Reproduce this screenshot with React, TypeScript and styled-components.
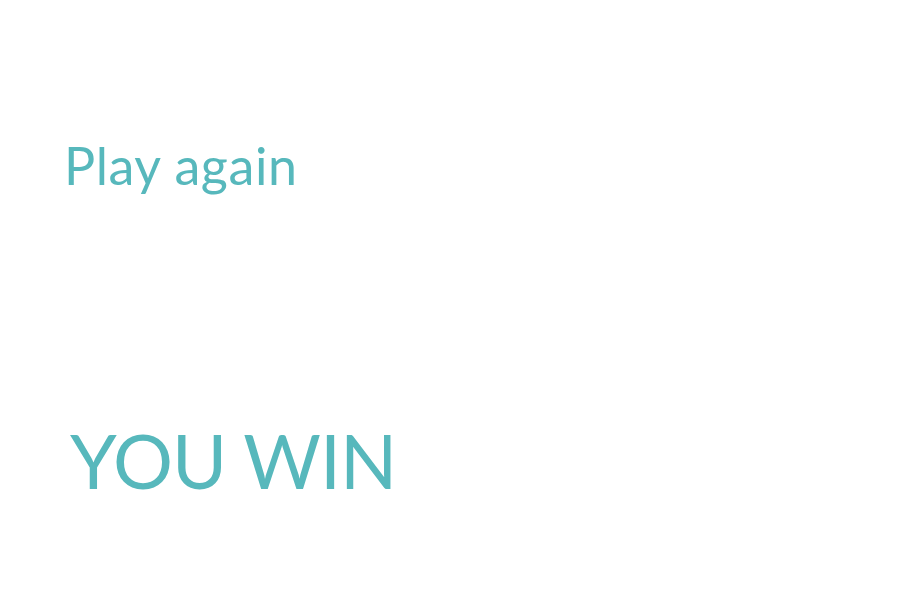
import styled, { createGlobalStyle } from "styled-components";

const GlobalStyle = createGlobalStyle`
  html, body {
    margin: 0;
    padding: 0;
    background: #ffffff;
  }
  body {
    font-family: Lato, "Open Sans", sans-serif;
  }
`;

const Screen = styled.main`
  width: 898px;
  height: 594px;
  box-sizing: border-box;
  display: flex;
  flex-direction: column;
  padding: 134px 0 0 64px;
`;

const PlayAgain = styled.button`
  align-self: flex-start;
  background: none;
  border: none;
  padding: 0;
  margin: 0;
  font-family: Lato, "Open Sans", sans-serif;
  font-size: 52px;
  font-weight: 400;
  color: #57b8bc;
  line-height: 1.2;
  letter-spacing: 0.6px;
  cursor: pointer;
`;

const Result = styled.h1`
  margin: 219px 0 0 6px;
  font-family: Lato, "Open Sans", sans-serif;
  font-size: 75px;
  font-weight: 400;
  color: #57b8bc;
  line-height: 1.2;
  letter-spacing: -1px;
`;

export default function App() {
  return (
    <>
      <GlobalStyle />
      <Screen>
        <PlayAgain>Play again</PlayAgain>
        <Result>YOU WIN</Result>
      </Screen>
    </>
  );
}
